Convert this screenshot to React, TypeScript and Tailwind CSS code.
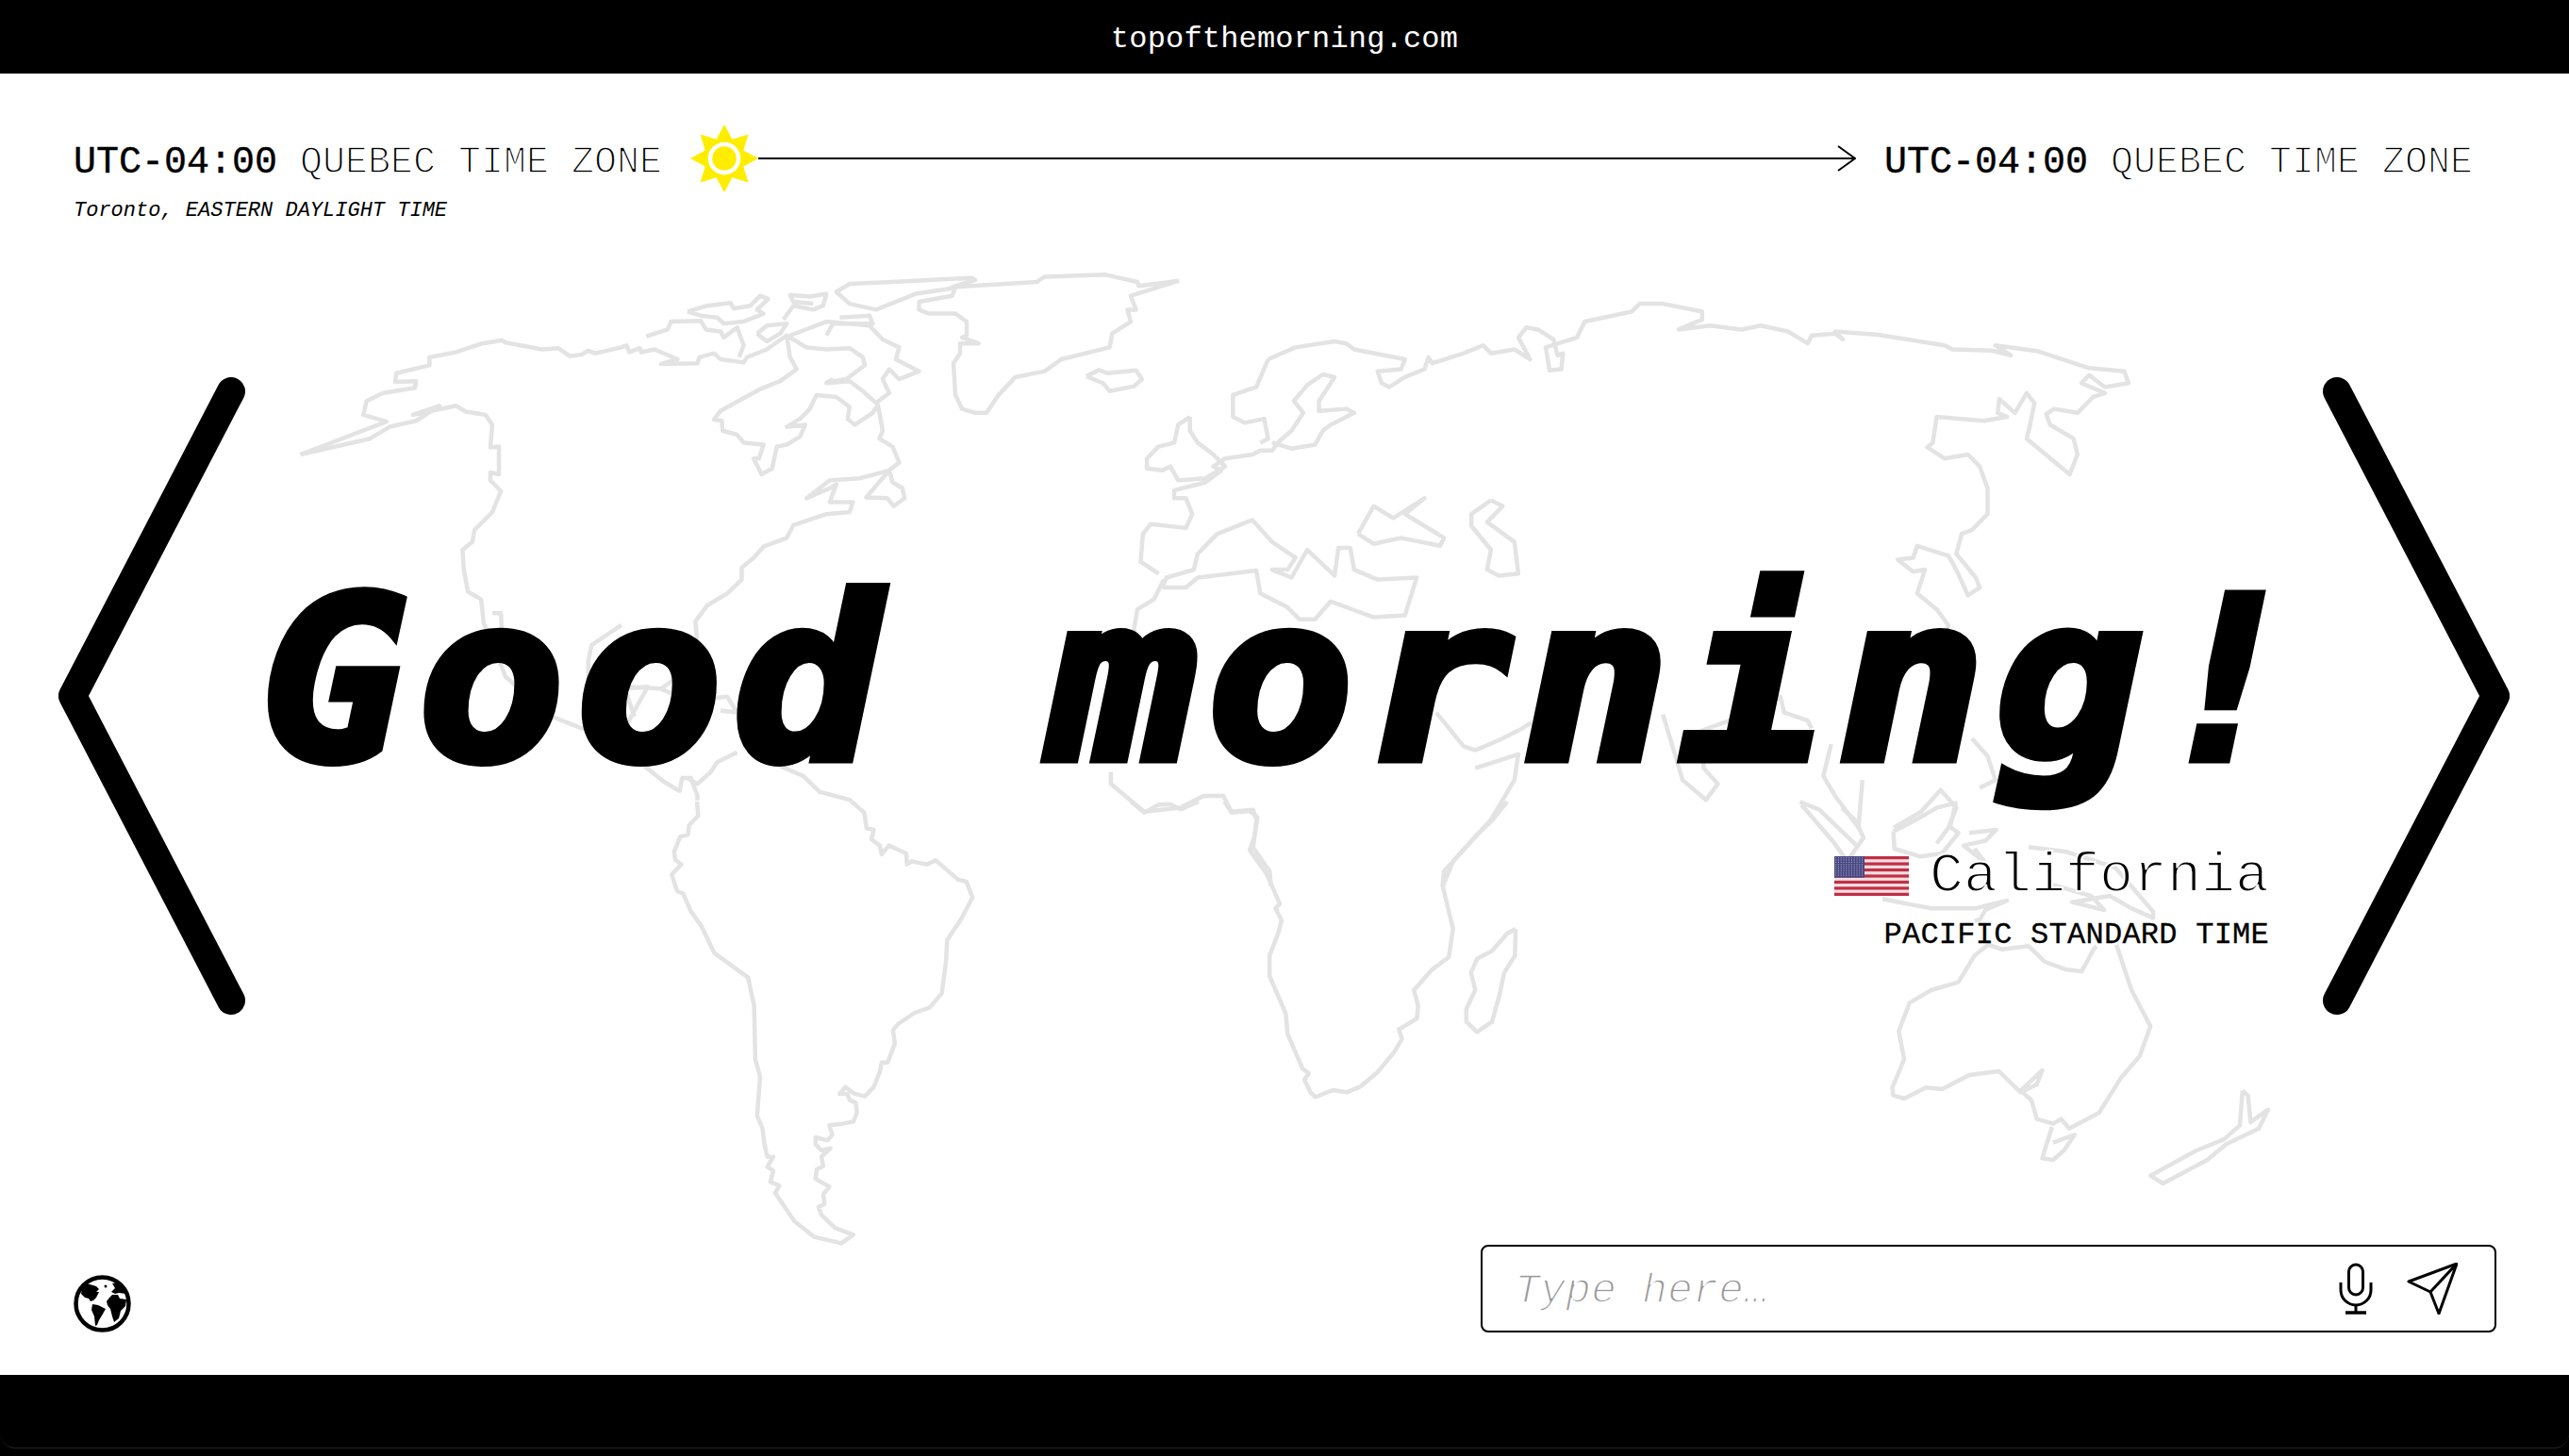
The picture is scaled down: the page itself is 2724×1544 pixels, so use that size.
const PX = 2724

type Tracing = { x: number; y: number; sx: number; sy: number; lines: string[] }

// coastlines, traced in four overlapping crops of the reference
const coast: Tracing[] = [
  {
    x: 280,
    y: 280,
    sx: 1.4255,
    sy: 2.376,
    lines: [
      "55,480 185,397 150,380 155,345 180,325 228,312 230,295 198,297 200,275 250,255 250,235 290,222 330,200 360,192 365,198 420,215 445,212 462,232 480,228 490,218 500,225 540,210 548,205 552,222 568,212 570,222 590,215 625,240 600,252 655,250 658,235 680,225 690,240 725,248 730,235 760,215 790,180 795,235 805,265 780,295 750,315 690,370 680,392 692,395 693,420 715,430 725,450 755,455 748,490 740,490 752,530 768,515 775,460 790,455 810,435 818,405 790,410 810,390 825,365 835,330 865,335 885,360 882,390 893,405 920,375 928,355 935,420 930,440 950,460 960,500 945,520 910,588 942,590 952,610 968,590 965,565 950,550 945,520 900,540 855,545 820,590 855,565 865,555 855,600 890,600 885,625 850,630 800,658 790,690 755,712 740,740 722,765 722,795 700,830 670,860 652,900 655,960 650,1040",
      "55,480 160,440 190,410 230,395 265,357 225,380 290,357 305,372 335,380 345,405 342,462 355,460 355,530 342,525 342,545 358,572 345,625 318,670 315,700 300,720 302,770 308,825 328,845 332,905 350,975 365,1040 435,1140 480,1170 545,1170 580,1065 545,1070 560,1140",
      "540,910 495,960 490,1000 490,1060 600,1070 625,1040",
      "345,880 358,880 360,950",
      "575,1265 605,1305 628,1328 632,1295 645,1295 655,1340 655,1352",
      "780,1265 815,1290 840,1330 885,1350 888,1354",
      "600,1070 640,1100 700,1090 715,1130 690,1125",
      "715,1230 685,1255 675,1280 655,1310 640,1295",
      "1383,42 1322,55 1320,45 1272,27 1180,32 1168,45 1040,58 1075,40 1070,35 950,45 885,50 865,70 885,100 925,115 985,75 1045,60 1040,80 990,95 990,115 1005,125 1045,125 1062,145 1062,180 1055,185 1080,200 1052,200 1052,225 1042,250 1045,330 1055,365 1075,375 1092,375 1110,330 1130,295 1135,285 1180,270 1205,240 1278,210 1282,175 1310,145 1305,115 1318,115 1310,80 1383,42",
      "1243,283 1262,267 1275,275 1318,268 1327,290 1315,308 1278,320 1268,300 1243,283",
      "640,120 670,105 705,98 710,112 735,105 750,80 762,88 745,115 755,125 725,145 695,150 685,135 660,130 640,120",
      "578,182 610,165 615,145 660,143 668,165 690,170 695,185 715,160 725,205 718,235",
      "785,140 800,105 830,115 845,105 850,75 825,82 795,78 800,95 830,100",
      "745,175 760,155 790,150 780,175 760,195 745,175",
      "795,180 850,145 915,155 935,190 960,210 955,240 990,270 960,290 945,265 935,290 945,325 925,350 905,320 885,295 850,300 860,290",
      "790,180 820,210 850,215 885,212 905,235 908,255 880,290 850,298",
      "870,135 915,130 920,150 860,150 850,180",
      "1360,795 1345,845 1320,870 1315,920 1320,960",
      "1280,1280 1280,1310 1330,1380 1385,1370 1420,1340 1450,1340 1462,1380 1495,1375 1500,1400 1495,1470 1520,1530 1522,1568",
    ],
  },
  {
    x: 1100,
    y: 280,
    sx: 1.206,
    sy: 2.376,
    lines: [
      "295,240 330,210 380,195 395,200 405,215 470,240 465,265 435,270 440,300 450,310 470,285 495,265 500,235 505,250 545,225 570,205 580,225 610,215 630,240 615,185 625,160 640,165 660,190 665,230 672,225 670,265 655,268 650,210 690,185 700,145 760,120 770,100 800,100 850,120 850,140 820,165 860,155 900,165 925,155 960,170 985,200 990,180 1020,175 1030,190 1020,170 1075,178 1160,205 1170,215 1220,218 1245,230 1225,205 1280,220 1345,262 1390,270 1395,300 1365,310 1345,280 1335,300 1365,325 1350,335 1330,375 1300,365 1290,378 1295,405 1325,440 1330,480 1320,530 1265,440 1270,400 1275,350 1265,325 1250,375 1230,340 1228,375 1240,385 1210,395 1150,385 1145,450 1138,462 1160,490 1190,480 1205,510 1215,565 1215,630 1195,670 1182,680 1175,730 1200,790 1205,815 1190,835 1175,770 1165,735 1125,710 1120,740 1100,745 1120,775 1135,770 1125,830 1150,870 1165,910 1160,945",
      "295,240 280,310 250,330 250,385 265,400 290,390 295,440 285,450",
      "300,450 325,465 355,455 365,420 375,405 405,375 395,365 360,370 360,345 380,285 365,278 345,305 328,345 340,375 325,420 310,445 300,470 285,470 275,480 240,490 225,510 235,520 215,550 175,570 175,590 190,590 198,630 190,665 145,655 135,680 132,750 155,780",
      "195,385 180,405 175,450 155,460 140,490 140,515 160,520 170,510 180,545 215,540 240,510 225,480 205,450 195,420 195,385",
      "160,815 165,790 200,770 205,730 230,680 275,645 300,700 330,740 320,770 300,770 325,790 345,720 380,785 385,715 400,715 405,770 435,795 485,790 470,885 430,890 375,850 355,895 335,895 320,865 285,830 280,772 205,790 190,815 160,815",
      "410,680 430,610 455,640 495,590 470,630 520,690 515,710 465,690 430,705 410,680",
      "580,595 595,610 575,650 610,700 615,780 590,785 575,770 580,720 555,660 555,630 580,595",
      "510,1130 545,1215 560,1225 590,1200 620,1170 632,1155",
      "560,1270 615,1235 610,1300 580,1400 520,1530 518,1568",
      "800,1135 825,1300 855,1350 870,1310 852,1270 850,1175 885,1150 915,1130 950,1090 955,1130 985,1150 990,1170",
      "1015,1210 1005,1290 1020,1340 1050,1420 1055,1300",
      "975,1355 1000,1375 1050,1470",
      "1095,1420 1130,1380 1155,1325 1175,1370 1165,1420 1150,1460",
      "1195,1195 1215,1240 1225,1300 1205,1320",
    ],
  },
  {
    x: 600,
    y: 850,
    sx: 1.568,
    sy: 3,
    lines: [
      "218,0 220,45 205,75 203,105 190,112 180,160 182,185 192,200 176,232 185,285 195,293 208,350 225,395 247,482 303,560 313,650 315,820 323,875 318,1000 327,1040 330,1090 335,1130 345,1130 335,1162 345,1175 340,1210 355,1222 348,1245 380,1335 413,1385 458,1405 478,1378 448,1357 425,1315 420,1290 430,1280 428,1250 438,1225 415,1200 417,1170 428,1160 425,1130 440,1103 425,1110 415,1090 415,1068 435,1078 443,1060 438,1030 460,1025 478,1018 484,990 482,958 472,950 468,930 455,930 465,908 478,928 497,938 512,908 522,860 525,830 535,830 547,770 544,728 552,708 580,672 605,655 625,610 632,510 634,440 657,375 676,305 666,255 652,248 615,187 600,200 575,190 567,200 566,165 537,140 525,168 522,140 508,120 512,90 500,85 496,35 475,0",
      "940,0 962,35 985,10 1005,8 1022,25 1052,0",
      "1095,0 1107,35 1137,30 1150,50 1145,110 1137,155 1165,230 1187,325 1180,340 1190,378 1185,415 1170,490 1170,555 1197,675 1200,740 1225,850 1235,865 1228,885 1238,925 1246,940 1275,918 1298,925 1320,908 1350,860 1378,795 1390,755 1385,725 1415,690 1417,650 1410,600 1440,535 1468,495 1475,405 1458,270 1475,190 1515,105 1540,60 1565,0",
      "1579,405 1565,420 1540,475 1515,500 1505,545 1512,600 1497,660 1497,700 1515,733 1540,700 1553,610 1560,545 1578,490 1579,405",
    ],
  },
  {
    x: 1600,
    y: 850,
    sx: 1.742,
    sy: 3,
    lines: [
      "540,10 570,70 600,130 625,190 655,115 640,60 615,20",
      "690,310 780,340 860,340 920,315 880,345 870,375 860,380",
      "710,95 750,60 790,20 825,5 815,80 830,100 800,165 760,175 712,150 710,95",
      "850,100 900,90 880,125 840,140 880,195 860,150",
      "960,145 1030,160 1120,210 1190,350 1190,370 1150,340 1110,300 1040,320 1100,345 1075,300 1005,265",
      "1122,455 1150,600 1185,715 1165,810 1130,880 1090,990 1035,1040 1020,1010 1005,1025 975,1010 965,950 945,920 985,855 975,900 945,925 905,858 850,870 800,915 770,910 730,945 710,935 708,910 730,820 720,730 740,640 780,600 830,575 860,490 885,455 910,470 960,460 990,510 1030,535 1058,540 1080,470 1085,460",
      "1003,1035 985,1135 1005,1140 1025,1110 1045,1060 1005,1085",
      "1355,920 1350,1030 1320,1075 1270,1110 1185,1190 1208,1215 1290,1140 1325,1090 1385,1040 1402,980 1370,1020 1365,935 1355,920",
    ],
  },
]

function WorldMap() {
  return (
    <svg
      viewBox="0 0 2724 1544"
      className="pointer-events-none absolute left-0 top-0 h-[1544px] w-[2724px]"
      fill="none"
      stroke="#e3e3e3"
      strokeWidth="4.5"
      strokeLinejoin="round"
    >
      {coast.map((t) => (
        <g key={t.x} transform={`translate(${t.x} ${t.y}) scale(${1 / t.sx} ${1 / t.sy})`}>
          {t.lines.map((pts, i) => (
            <polyline key={i} points={pts} vectorEffect="non-scaling-stroke" />
          ))}
        </g>
      ))}
    </svg>
  )
}

function Sun() {
  const points = Array.from({ length: 16 }, (_, i) => {
    const r = i % 2 === 0 ? 36 : 22
    const a = (i * Math.PI) / 8 - Math.PI / 2
    return `${36 + r * Math.cos(a)},${36 + r * Math.sin(a)}`
  }).join(" ")
  return (
    <svg viewBox="0 0 72 72" className="h-[72px] w-[72px] shrink-0">
      <polygon points={points} fill="#ffed00" />
      <circle cx="36" cy="36" r="15" fill="#ffed00" stroke="#fff" strokeWidth="4.5" />
    </svg>
  )
}

function Chevron({ flip }: { flip?: boolean }) {
  return (
    <svg viewBox="0 0 198 676" className={`h-[676px] w-[198px] shrink-0 ${flip ? "-scale-x-100" : ""}`}>
      <polyline
        points="183,15 15,338 183,661"
        fill="none"
        stroke="#000"
        strokeWidth="30"
        strokeLinecap="round"
        strokeLinejoin="round"
      />
    </svg>
  )
}

function Flag() {
  const dots = []
  for (let y = 0; y < 9; y++) {
    for (let x = 0; x < 11; x++) {
      dots.push(<rect key={`${x}-${y}`} x={1 + x * 2.8} y={1.2 + y * 2.3} width="1.2" height="1.2" fill="#9a9ac4" />)
    }
  }
  return (
    <svg viewBox="0 0 79 42" className="h-[42px] w-[79px] shrink-0">
      <rect width="79" height="42" fill="#f4dfe2" />
      {[0, 1, 2, 3, 4, 5, 6].map((i) => (
        <rect key={i} y={i * 6.46} width="79" height="3.23" fill="#bf2f46" />
      ))}
      <rect width="32" height="22.6" fill="#46467f" />
      {dots}
    </svg>
  )
}

function Globe() {
  return (
    <svg viewBox="0 0 61 61" className="h-[61px] w-[61px]">
      <circle cx="30.5" cy="30.5" r="28" fill="#fff" stroke="#000" strokeWidth="4.5" />
      <path d="M9 14 L14 9 L24 12 L27 15 L24 18 L27 18 L24 24 L21 27 L18 28 L16 25 L12 24 L8 20Z" />
      <path d="M20 31 L26 32 L34 36 L30 43 L27 48 L25 53 L23 54 L22 44 L19 37Z" />
      <path d="M38 24 L41 21 L47 21 L49 25 L56 26 L55 33 L50 38 L48 46 L43 50 L41 44 L39 36 L36 32 L35 28Z" />
      <path d="M41 9 L48 8 L53 13 L56 20 L48 19 L44 20 L40 18 L44 14Z" />
      <circle cx="34" cy="12" r="1.5" />
    </svg>
  )
}

function Mic() {
  return (
    <svg viewBox="0 0 36 55" className="h-[55px] w-[36px] shrink-0" fill="none" stroke="#000" strokeWidth="3">
      <rect x="10.5" y="2" width="15" height="32" rx="7.5" />
      <path d="M2 21v8a16 16 0 0 0 32 0v-8" />
      <path d="M18 45v8" />
      <path d="M7 53h22" strokeWidth="3.5" />
    </svg>
  )
}

function SendIcon() {
  return (
    <svg viewBox="0 0 54 55" className="h-[55px] w-[54px] shrink-0" fill="none" stroke="#000" strokeWidth="3" strokeLinejoin="round">
      <path d="M53 1 L2 20 L25 31 L34 54 Z" />
      <path d="M53 1 L25 31" />
    </svg>
  )
}

function Zone() {
  return (
    <p className="mt-[10px] text-[40px] leading-[48px] whitespace-pre">
      <span className="[-webkit-text-stroke:0.4px_#000]">UTC-04:00</span>{" "}
      <span className="[-webkit-text-stroke:1.6px_#fff]">QUEBEC TIME ZONE</span>
    </p>
  )
}

export default function App() {
  return (
    <div
      className="relative flex h-[1544px] flex-col overflow-hidden bg-white font-['Liberation_Mono',monospace] text-black"
      style={{ width: PX }}
    >
      <WorldMap />

      <header className="relative flex h-[78px] shrink-0 items-center justify-center bg-black pt-[6px] text-[32px] tracking-[0.18px] text-white">
        topofthemorning.com
      </header>

      <main className="relative flex flex-1 flex-col">
        <section className="pl-[78px] pr-[102px] pt-[54px]">
          <div className="flex items-center">
            <Zone />
            <div className="ml-[30px]">
              <Sun />
            </div>
            <div className="relative h-[2px] flex-1 bg-black">
              <svg viewBox="0 0 20 28" className="absolute right-[-2px] top-[-13px] h-[28px] w-[20px]" fill="none" stroke="#000" strokeWidth="2">
                <path d="M1 1 L19 14 L1 27" />
              </svg>
            </div>
            <div className="ml-[32px]">
              <Zone />
            </div>
          </div>
          <p className="mt-[6px] text-[22px] italic leading-[28px]">Toronto, EASTERN DAYLIGHT TIME</p>
        </section>

        <section className="mt-[162px] flex justify-between pl-[62px] pr-[63px]">
          <Chevron />
          <div className="flex min-w-0 flex-1 flex-col items-end pr-[49px]">
            <h1 className="ml-[16px] mt-[151px] origin-bottom scale-y-[0.93] self-start whitespace-pre font-['DejaVu_Sans_Mono',monospace] text-[258px] font-bold italic leading-[320px] tracking-[12px] [-webkit-text-stroke:10px_#000]">
              Good morning!
            </h1>
            <div className="mt-[23px] flex items-center gap-[22px] pr-[8px]">
              <Flag />
              <span className="text-[60px] leading-[70px] [-webkit-text-stroke:2px_#fff]">California</span>
            </div>
            <p className="mt-[8px] pr-[8px] text-[32px] leading-[40px] tracking-[0.25px] [-webkit-text-stroke:0.3px_#000]">PACIFIC STANDARD TIME</p>
          </div>
          <Chevron flip />
        </section>

        <section className="mt-auto flex items-end justify-between pb-[45px] pl-[78px] pr-[77px]">
          <Globe />
          <div className="flex h-[93px] w-[1077px] items-center rounded-[8px] border-2 border-black bg-white pl-[34px] pr-[39px]">
            <span className="mt-[6px] flex-1 text-[45px] italic text-[#999] [-webkit-text-stroke:1.7px_#fff]">Type here…</span>
            <Mic />
            <div className="ml-[36px]">
              <SendIcon />
            </div>
          </div>
        </section>
      </main>

      <footer className="relative flex h-[86px] shrink-0 flex-col justify-end bg-black pb-[8px]">
        <div className="h-[30px] rounded-b-[16px] border-b border-[#222]" />
      </footer>
    </div>
  )
}
